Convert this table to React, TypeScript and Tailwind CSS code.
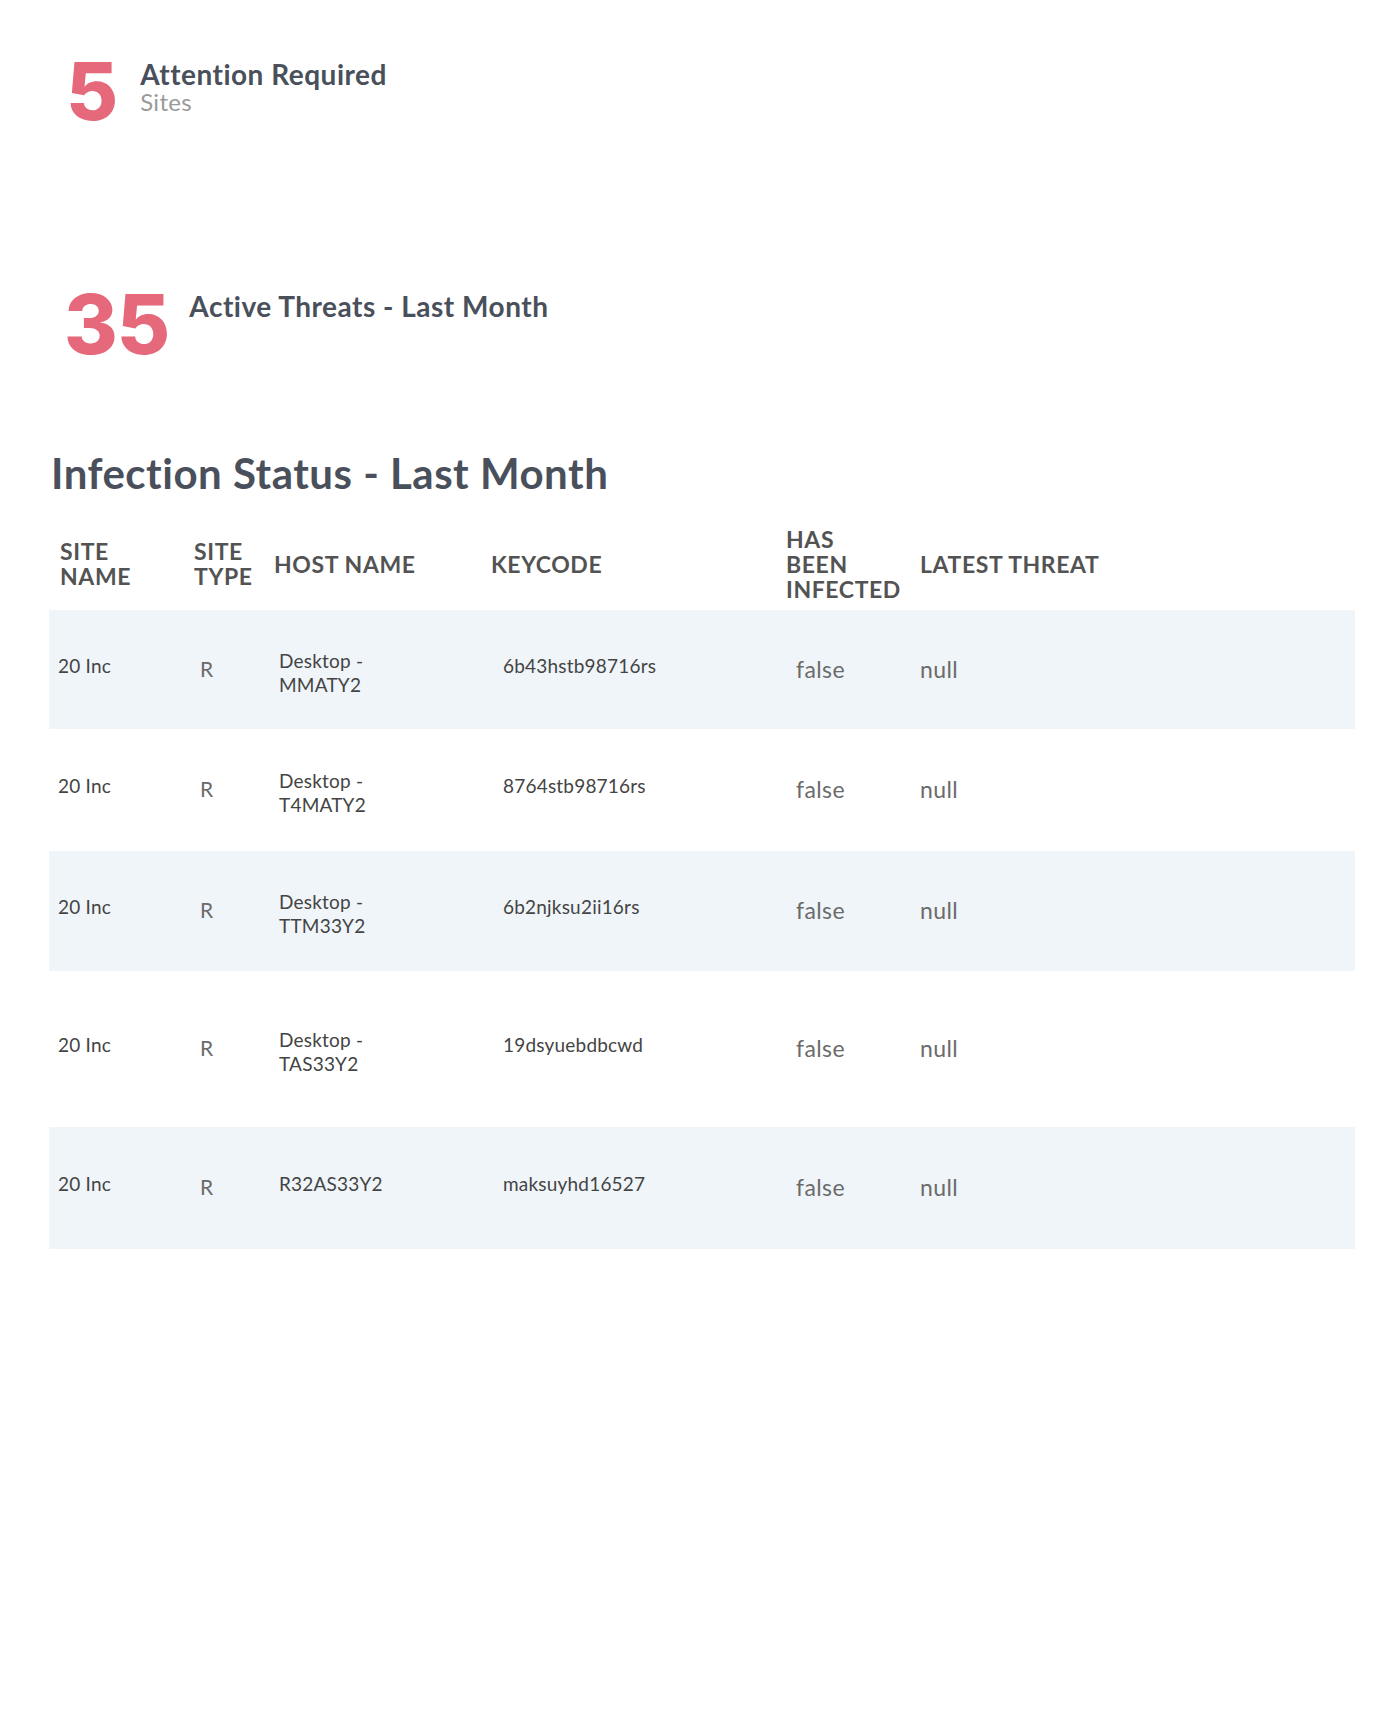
import React from 'react';

type Row = {
  site: string;
  type: string;
  host: string[];
  keycode: string;
  infected: string;
  threat: string;
  height: string;
};

const rows: Row[] = [
  { site: '20 Inc', type: 'R', host: ['Desktop -', 'MMATY2'], keycode: '6b43hstb98716rs', infected: 'false', threat: 'null', height: 'h-[119px]' },
  { site: '20 Inc', type: 'R', host: ['Desktop -', 'T4MATY2'], keycode: '8764stb98716rs', infected: 'false', threat: 'null', height: 'h-[122px]' },
  { site: '20 Inc', type: 'R', host: ['Desktop -', 'TTM33Y2'], keycode: '6b2njksu2ii16rs', infected: 'false', threat: 'null', height: 'h-[120px]' },
  { site: '20 Inc', type: 'R', host: ['Desktop -', 'TAS33Y2'], keycode: '19dsyuebdbcwd', infected: 'false', threat: 'null', height: 'h-[156px]' },
  { site: '20 Inc', type: 'R', host: ['R32AS33Y2'], keycode: 'maksuyhd16527', infected: 'false', threat: 'null', height: 'h-[122px]' },
];

const cols = 'grid grid-cols-[145px_80px_217px_295px_134px_1fr]';

function Stat({ value, title, sub, big }: { value: string; title: string; sub?: string; big?: boolean }) {
  return (
    <div className="flex items-start">
      <div
        className={`font-['Inter','Liberation_Sans',sans-serif] font-extrabold text-[#e5697b] ${
          big ? 'text-[82px] leading-[82px] tracking-[-1px]' : 'text-[80px] leading-[80px]'
        }`}
      >
        {value}
      </div>
      <div className={`flex flex-col ${big ? 'ml-[20px] mt-[7px]' : 'ml-[22px] mt-[8px]'}`}>
        <span className="text-[28px] leading-[30px] font-bold tracking-[0.5px] text-[#4a505b]">{title}</span>
        {sub && <span className="text-[24px] leading-[26px] tracking-[0.3px] text-[#9a9a9a]">{sub}</span>}
      </div>
    </div>
  );
}

export default function App() {
  return (
    <div className="min-h-[1712px] w-[1373px] bg-white font-['Lato','Liberation_Sans',sans-serif] text-[#444]">
      <div className="pl-[66px] pt-[51px]">
        <Stat value="5" title="Attention Required" sub="Sites" />
      </div>
      <div className="pl-[64px] pt-[153px]">
        <Stat value="35" title="Active Threats - Last Month" big />
      </div>

      <div className="pl-[49px] pr-[18px] pt-[83px]">
        <h2 className="pl-[2px] text-[42px] leading-[48px] font-bold tracking-[0.5px] text-[#4a505b]">
          Infection Status - Last Month
        </h2>

        <div
          className={`${cols} mt-[21px] h-[92px] items-center text-[23px] leading-[25px] font-bold uppercase tracking-[0.6px] text-[#535353]`}
        >
          <div className="pl-[11px]">
            <div>Site</div>
            <div>Name</div>
          </div>
          <div>
            <div>Site</div>
            <div>Type</div>
          </div>
          <div>Host Name</div>
          <div>Keycode</div>
          <div>
            <div>Has</div>
            <div>Been</div>
            <div>Infected</div>
          </div>
          <div>Latest Threat</div>
        </div>

        <div className="flex flex-col">
          {rows.map((r, i) => (
            <div key={i} className={`${cols} ${r.height} items-center ${i % 2 === 0 ? 'bg-[#f0f5f9]' : 'bg-white'}`}>
              <div className="pl-[9px] mb-[8px] text-[19px] leading-[24px] tracking-[0.2px] text-[#444]">{r.site}</div>
              <div className="pl-[6px] mb-[2px] text-[21px] leading-[24px] text-[#6a6a6a]">{r.type}</div>
              <div
                className={`pl-[5px] text-[19px] leading-[24px] tracking-[0.2px] text-[#444] ${
                  r.host.length > 1 ? 'mt-[6px]' : 'mb-[8px]'
                }`}
              >
                {r.host.map((h) => (
                  <div key={h}>{h}</div>
                ))}
              </div>
              <div className="pl-[12px] mb-[8px] text-[19px] leading-[24px] tracking-[0.2px] text-[#444]">{r.keycode}</div>
              <div className="pl-[10px] mb-[2px] text-[23px] leading-[24px] tracking-[0.4px] text-[#6b6b6b]">{r.infected}</div>
              <div className="mb-[2px] text-[23px] leading-[24px] tracking-[0.4px] text-[#6b6b6b]">{r.threat}</div>
            </div>
          ))}
        </div>
      </div>
    </div>
  );
}
